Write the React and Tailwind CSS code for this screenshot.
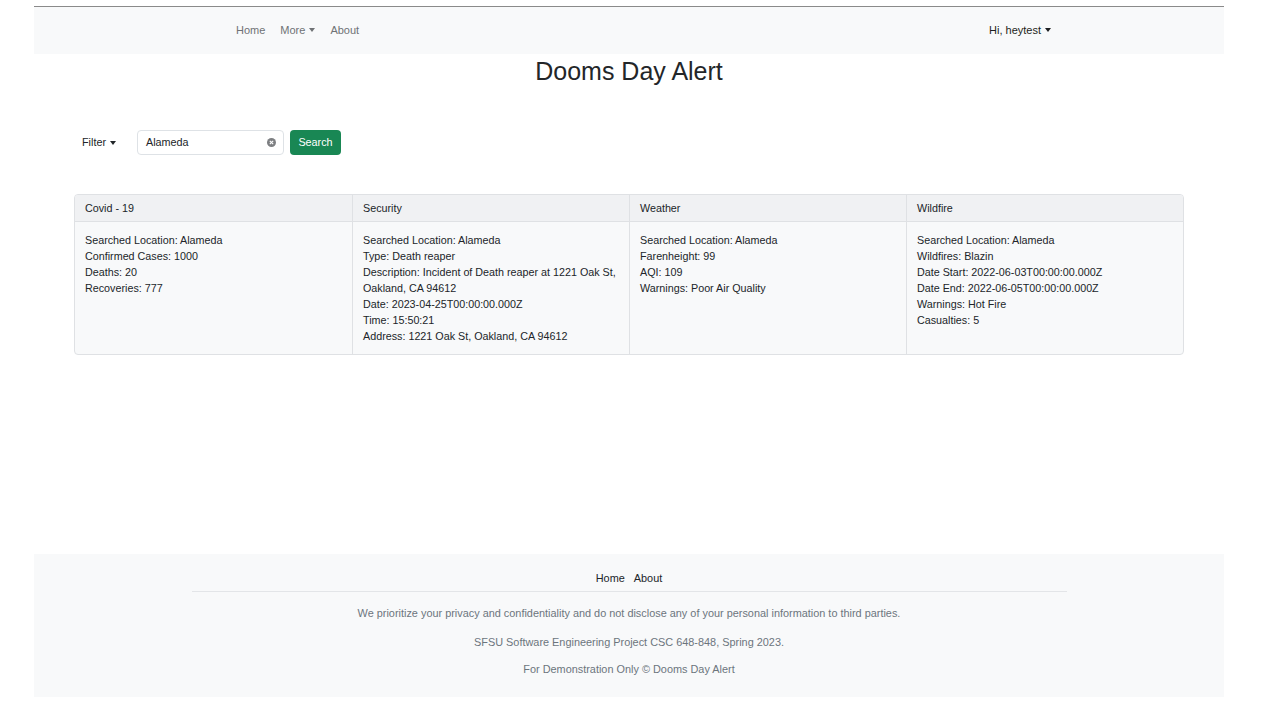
import React from "react";

const Caret = ({ className = "" }) => (
  <span
    className={`inline-block ml-[4px] align-middle w-0 h-0 border-t-[4px] border-t-current border-x-[3px] border-x-transparent relative top-[-1px] ${className}`}
  />
);

const cols = [
  {
    title: "Covid - 19",
    lines: [
      "Searched Location: Alameda",
      "Confirmed Cases: 1000",
      "Deaths: 20",
      "Recoveries: 777",
    ],
  },
  {
    title: "Security",
    lines: [
      "Searched Location: Alameda",
      "Type: Death reaper",
      "Description: Incident of Death reaper at 1221 Oak St, Oakland, CA 94612",
      "Date: 2023-04-25T00:00:00.000Z",
      "Time: 15:50:21",
      "Address: 1221 Oak St, Oakland, CA 94612",
    ],
  },
  {
    title: "Weather",
    lines: [
      "Searched Location: Alameda",
      "Farenheight: 99",
      "AQI: 109",
      "Warnings: Poor Air Quality",
    ],
  },
  {
    title: "Wildfire",
    lines: [
      "Searched Location: Alameda",
      "Wildfires: Blazin",
      "Date Start: 2022-06-03T00:00:00.000Z",
      "Date End: 2022-06-05T00:00:00.000Z",
      "Warnings: Hot Fire",
      "Casualties: 5",
    ],
  },
];

export default function App() {
  return (
    <div
      className="bg-white min-h-[714px] pt-[6px] text-[#212529]"
      style={{ fontFamily: '"Liberation Sans", Arial, sans-serif' }}
    >
      <div className="ml-[34px] w-[1190px]">
        {/* Nav */}
        <div className="border-t border-[#8a8a8a] bg-[#f8f9fa] h-[48px] flex items-center pl-[202px] pr-[173px] text-[11px]">
          <div className="flex items-center gap-[15px] text-[#6f7275]">
            <span>Home</span>
            <span>
              More
              <Caret />
            </span>
            <span>About</span>
          </div>
          <div className="ml-auto text-[#1d1f21]">
            Hi, heytest
            <Caret />
          </div>
        </div>

        {/* Title */}
        <h1 className="text-center text-[25px] leading-[34px] mt-0 text-[#232629] font-normal">
          Dooms Day Alert
        </h1>

        {/* Filter row */}
        <div className="flex items-center ml-[48px] mt-[42px] h-[25px] text-[10.8px]">
          <span className="text-[#212529]">
            Filter
            <Caret />
          </span>
          <div className="ml-[21px] w-[147px] h-[25px] border border-[#dee2e6] rounded-[4px] bg-white flex items-center pl-[8px] pr-[7px]">
            <span className="text-[#212529]">Alameda</span>
            <span className="ml-auto w-[9px] h-[9px] rounded-full bg-[#7d7f82] flex items-center justify-center">
              <svg width="5" height="5" viewBox="0 0 5 5">
                <path d="M0.8 0.8 L4.2 4.2 M4.2 0.8 L0.8 4.2" stroke="white" strokeWidth="1.1" />
              </svg>
            </span>
          </div>
          <div className="ml-[6px] w-[51px] h-[25px] rounded-[4px] bg-[#198754] text-white flex items-center justify-center">
            Search
          </div>
        </div>

        {/* Card */}
        <div className="mx-[40px] mt-[39px] border border-[#dfe1e4] rounded-[4px] overflow-hidden grid grid-cols-4 text-[10.75px] bg-[#f8f9fa]">
          {cols.map((c, i) => (
            <div
              key={c.title}
              className={`flex flex-col ${i > 0 ? "border-l border-[#dfe1e4]" : ""}`}
            >
              <div className="h-[27px] bg-[#f0f1f3] border-b border-[#dfe1e4] flex items-center px-[10px] text-[#212529]">
                {c.title}
              </div>
              <div className="px-[10px] py-[10px] leading-[16px] text-[#212529]">
                {c.lines.map((l) => (
                  <div key={l}>{l}</div>
                ))}
              </div>
            </div>
          ))}
        </div>

        {/* Footer */}
        <div className="mt-[199px] bg-[#f8f9fa] h-[143px] pt-[16px] text-[10.9px]">
          <div className="flex justify-center gap-[9px] text-[#212529] leading-[16px]">
            <span>Home</span>
            <span>About</span>
          </div>
          <div className="mx-auto w-[875px] border-t border-[#e3e5e8] mt-[5px]" />
          <div className="text-center text-[#6c757d] leading-[16px] mt-[13px]">
            We prioritize your privacy and confidentiality and do not disclose any of your personal information to third parties.
          </div>
          <div className="text-center text-[#6c757d] leading-[16px] mt-[13px]">
            SFSU Software Engineering Project CSC 648-848, Spring 2023.
          </div>
          <div className="text-center text-[#6c757d] leading-[16px] mt-[11px]">
            For Demonstration Only © Dooms Day Alert
          </div>
        </div>
      </div>
    </div>
  );
}
